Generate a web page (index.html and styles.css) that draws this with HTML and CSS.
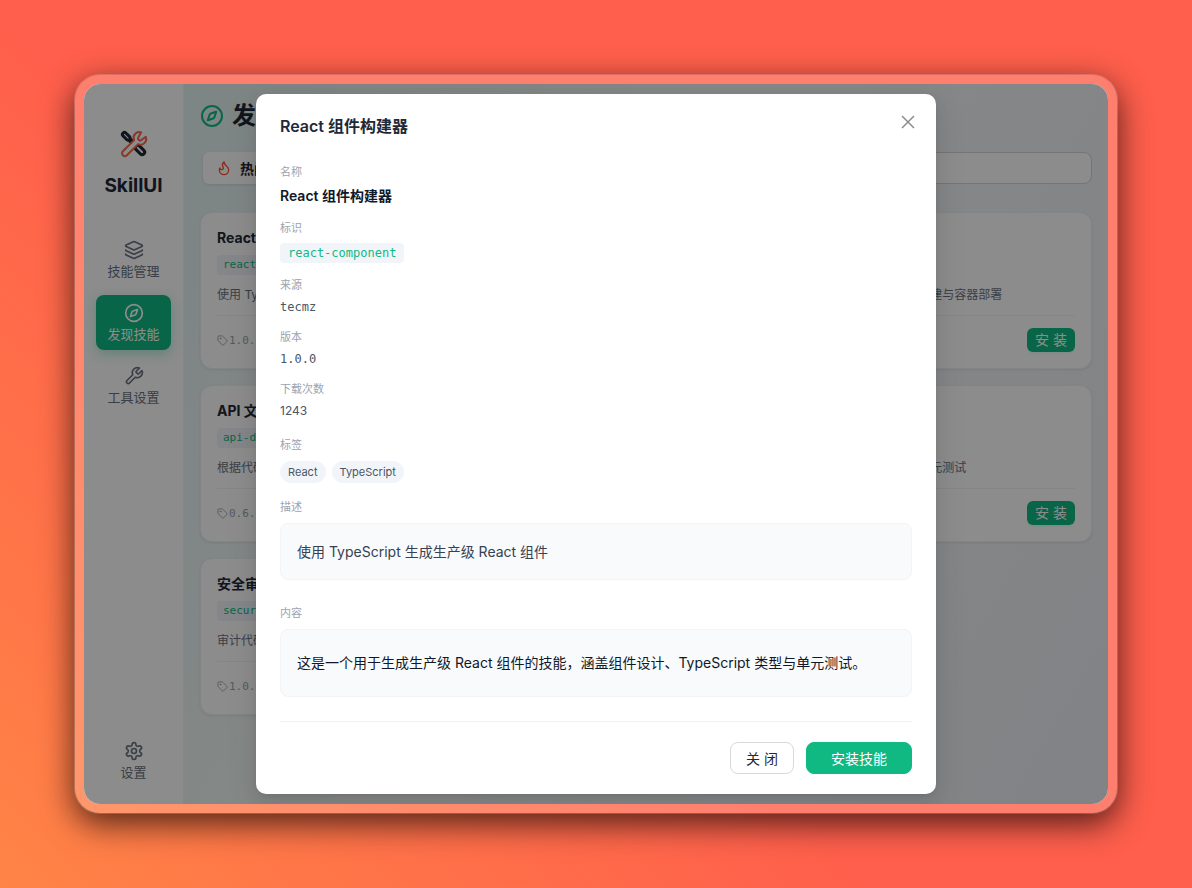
FILE: index.html
```html
<!DOCTYPE html>
<html lang="zh-CN">
<head>
    <meta charset="UTF-8">
    <meta name="viewport" content="width=device-width, initial-scale=1.0">
    <title>SkillUI</title>
    <link rel="stylesheet" href="styles.css">
</head>
<body>
    <!-- 公用图标 -->
    <svg class="sprite" aria-hidden="true">
        <symbol id="compass" viewBox="0 0 24 24">
            <circle cx="12" cy="12" r="10"/>
            <path d="m16.24 7.76-1.804 5.411a2 2 0 0 1-1.265 1.265L7.76 16.24l1.804-5.411a2 2 0 0 1 1.265-1.265z"/>
        </symbol>
        <symbol id="tag" viewBox="0 0 24 24">
            <path d="M12.586 2.586A2 2 0 0 0 11.172 2H4a2 2 0 0 0-2 2v7.172a2 2 0 0 0 .586 1.414l8.704 8.704a2.426 2.426 0 0 0 3.42 0l6.58-6.58a2.426 2.426 0 0 0 0-3.42z"/>
            <circle cx="7.5" cy="7.5" r="1"/>
        </symbol>
    </svg>

    <div class="window">
        <aside class="sidebar">
            <div class="brand">
                <svg class="logo" viewBox="0 0 28 28" aria-hidden="true">
                    <g class="logo-driver" transform="rotate(-45 14 14)">
                        <path d="M12 0.500a2 2 0 0 1 4 0v5.500l-1 2v6h-2v-6l-1-2z"/>
                        <path d="M11.500 17h5v8.500a2.500 2.500 0 0 1-5 0z"/>
                    </g>
                    <path class="logo-wrench" d="M18.300 7.600a1.200 1.200 0 0 0 0 1.700l1 1a1.200 1.200 0 0 0 1.700 0l4.700-3.400a5.600 5.600 0 0 1-7.600 7.200L6.900 25.300a2.800 2.800 0 0 1-4-4L14.100 10.100a5.600 5.600 0 0 1 7-7.600z"/>
                </svg>
                <span class="brand-name">SkillUI</span>
            </div>
            <nav class="nav">
                <a class="nav-item" href="#manage">
                    <svg class="icon" viewBox="0 0 24 24" aria-hidden="true">
                        <path d="M12.830 2.180a2 2 0 0 0-1.660 0L2.600 6.080a1 1 0 0 0 0 1.830l8.580 3.910a2 2 0 0 0 1.660 0l8.580-3.900a1 1 0 0 0 0-1.830z"/>
                        <path d="M2 12a1 1 0 0 0 .58.910l8.600 3.910a2 2 0 0 0 1.650 0l8.580-3.900A1 1 0 0 0 22 12"/>
                        <path d="M2 17a1 1 0 0 0 .58.910l8.600 3.910a2 2 0 0 0 1.650 0l8.580-3.900A1 1 0 0 0 22 17"/>
                    </svg>
                    <span>技能管理</span>
                </a>
                <a class="nav-item active" href="#discover">
                    <svg class="icon" aria-hidden="true"><use href="#compass"/></svg>
                    <span>发现技能</span>
                </a>
                <a class="nav-item" href="#tools">
                    <svg class="icon" viewBox="0 0 24 24" aria-hidden="true">
                        <path d="M14.700 6.300a1 1 0 0 0 0 1.400l1.600 1.600a1 1 0 0 0 1.400 0l3.770-3.770a6 6 0 0 1-7.940 7.940l-6.910 6.910a2.120 2.120 0 0 1-3-3l6.910-6.910a6 6 0 0 1 7.940-7.940z"/>
                    </svg>
                    <span>工具设置</span>
                </a>
                <a class="nav-item nav-bottom" href="#settings">
                    <svg class="icon" viewBox="0 0 24 24" aria-hidden="true">
                        <path d="M12.220 2h-.44a2 2 0 0 0-2 2v.18a2 2 0 0 1-1 1.730l-.43.25a2 2 0 0 1-2 0l-.15-.08a2 2 0 0 0-2.730.73l-.22.38a2 2 0 0 0 .73 2.730l.15.1a2 2 0 0 1 1 1.720v.51a2 2 0 0 1-1 1.740l-.15.09a2 2 0 0 0-.73 2.730l.22.38a2 2 0 0 0 2.730.73l.15-.08a2 2 0 0 1 2 0l.43.25a2 2 0 0 1 1 1.730V20a2 2 0 0 0 2 2h.44a2 2 0 0 0 2-2v-.18a2 2 0 0 1 1-1.730l.43-.25a2 2 0 0 1 2 0l.15.08a2 2 0 0 0 2.730-.73l.22-.39a2 2 0 0 0-.73-2.730l-.15-.08a2 2 0 0 1-1-1.740v-.5a2 2 0 0 1 1-1.740l.15-.09a2 2 0 0 0 .73-2.730l-.22-.38a2 2 0 0 0-2.730-.73l-.15.08a2 2 0 0 1-2 0l-.43-.25a2 2 0 0 1-1-1.730V4a2 2 0 0 0-2-2z"/>
                        <circle cx="12" cy="12" r="3"/>
                    </svg>
                    <span>设置</span>
                </a>
            </nav>
        </aside>

        <main class="main">
            <h1 class="page-title">
                <svg class="icon icon-lg" aria-hidden="true"><use href="#compass"/></svg>
                <span>发现技能</span>
            </h1>
            <div class="toolbar">
                <button class="tab" type="button">
                    <svg class="icon icon-sm" viewBox="0 0 24 24" aria-hidden="true">
                        <path d="M8.500 14.500A2.500 2.500 0 0 0 11 12c0-1.380-.5-2-1-3-1.072-2.143-.224-4.054 2-6 .5 2.500 2 4.900 4 6.500 2 1.600 3 3.500 3 5.500a7 7 0 1 1-14 0c0-1.153.433-2.294 1-3a2.500 2.500 0 0 0 2.500 2.500z"/>
                    </svg>
                    热门
                </button>
                <input class="search" type="search" aria-label="搜索技能">
            </div>
            <div class="cards">
                <article class="card">
                    <h2>React 组件构建器</h2>
                    <code class="slug">react-component</code>
                    <p>使用 TypeScript 生成生产级 React 组件</p>
                    <div class="card-foot">
                        <span class="version"><svg class="icon icon-xs" aria-hidden="true"><use href="#tag"/></svg>1.0.0</span>
                        <button class="install" type="button">安 装</button>
                    </div>
                </article>
                <article class="card">
                    <h2>SQL 优化</h2>
                    <code class="slug">sql-optimizer</code>
                    <p>分析并优化数据库查询</p>
                    <div class="card-foot">
                        <span class="version"><svg class="icon icon-xs" aria-hidden="true"><use href="#tag"/></svg>1.0.0</span>
                        <button class="install" type="button">安 装</button>
                    </div>
                </article>
                <article class="card">
                    <h2>Docker</h2>
                    <code class="slug">docker</code>
                    <p>自动完成应用镜像构建与容器部署</p>
                    <div class="card-foot">
                        <span class="version"><svg class="icon icon-xs" aria-hidden="true"><use href="#tag"/></svg>1.0.0</span>
                        <button class="install" type="button">安 装</button>
                    </div>
                </article>
                <article class="card">
                    <h2>API 文档</h2>
                    <code class="slug">api-docs</code>
                    <p>根据代码生成文档</p>
                    <div class="card-foot">
                        <span class="version"><svg class="icon icon-xs" aria-hidden="true"><use href="#tag"/></svg>0.6.4</span>
                        <button class="install" type="button">安 装</button>
                    </div>
                </article>
                <article class="card">
                    <h2>代码评审</h2>
                    <code class="slug">code-review</code>
                    <p>检查代码质量与规范</p>
                    <div class="card-foot">
                        <span class="version"><svg class="icon icon-xs" aria-hidden="true"><use href="#tag"/></svg>1.0.0</span>
                        <button class="install" type="button">安 装</button>
                    </div>
                </article>
                <article class="card">
                    <h2>单元测试</h2>
                    <code class="slug">unit-test</code>
                    <p>自动生成高覆盖率单元测试</p>
                    <div class="card-foot">
                        <span class="version"><svg class="icon icon-xs" aria-hidden="true"><use href="#tag"/></svg>1.0.0</span>
                        <button class="install" type="button">安 装</button>
                    </div>
                </article>
                <article class="card">
                    <h2>安全审计</h2>
                    <code class="slug">security</code>
                    <p>审计代码安全漏洞</p>
                    <div class="card-foot">
                        <span class="version"><svg class="icon icon-xs" aria-hidden="true"><use href="#tag"/></svg>1.0.0</span>
                        <button class="install" type="button">安 装</button>
                    </div>
                </article>
            </div>
        </main>

        <!-- 技能详情弹窗 -->
        <div class="overlay">
            <section class="modal" role="dialog" aria-modal="true" aria-labelledby="modalTitle">
                <button class="modal-close" type="button" aria-label="关闭">
                    <svg viewBox="0 0 14 14" aria-hidden="true"><path d="M1 1l12 12M13 1L1 13"/></svg>
                </button>
                <h2 class="modal-title" id="modalTitle">React 组件构建器</h2>
                <dl class="details">
                    <div class="field">
                        <dt>名称</dt>
                        <dd class="name">React 组件构建器</dd>
                    </div>
                    <div class="field">
                        <dt>标识</dt>
                        <dd class="ident"><code>react-component</code></dd>
                    </div>
                    <div class="field">
                        <dt>来源</dt>
                        <dd class="mono">tecmz</dd>
                    </div>
                    <div class="field">
                        <dt>版本</dt>
                        <dd class="mono">1.0.0</dd>
                    </div>
                    <div class="field">
                        <dt>下载次数</dt>
                        <dd>1243</dd>
                    </div>
                </dl>
                <div class="block">
                    <h3>标签</h3>
                    <div class="tags">
                        <span class="tag">React</span>
                        <span class="tag">TypeScript</span>
                    </div>
                </div>
                <div class="block">
                    <h3>描述</h3>
                    <div class="panel">使用 TypeScript 生成生产级 React 组件</div>
                </div>
                <div class="block block-content">
                    <h3>内容</h3>
                    <div class="panel panel-content">这是一个用于生成生产级 React 组件的技能，涵盖组件设计、TypeScript 类型与单元测试。</div>
                </div>
                <div class="modal-foot">
                    <button class="btn" type="button">关 闭</button>
                    <button class="btn btn-primary" type="button">安装技能</button>
                </div>
            </section>
        </div>
    </div>
</body>
</html>
```
FILE: styles.css
```css
* {
    box-sizing: border-box;
}

body {
    margin: 0;
    min-height: 100vh;
    padding: 74px;
    display: flex;
    font-family: Inter, "Noto Sans CJK SC", sans-serif;
    font-size: 14px;
    color: #1f2937;
    background: linear-gradient(45deg, #ff8446 0%, #ff5f4c 42%);
}

h1, h2, h3, p, dl, dd {
    margin: 0;
}

button, input {
    font-family: inherit;
}

button {
    cursor: pointer;
}

code, .mono, .version {
    font-family: "DejaVu Sans Mono", monospace;
}

.sprite {
    position: absolute;
    width: 0;
    height: 0;
}

.icon {
    width: 20px;
    height: 20px;
    flex: none;
    fill: none;
    stroke: currentColor;
    stroke-width: 2;
    stroke-linecap: round;
    stroke-linejoin: round;
}

.icon-lg {
    width: 24px;
    height: 24px;
    color: #10b981;
}

.icon-sm {
    width: 16px;
    height: 16px;
    color: #f9532d;
}

.icon-xs {
    width: 11px;
    height: 11px;
}

/* 窗口外框 */
.window {
    position: relative;
    flex: 1;
    min-width: 0;
    display: flex;
    border: 10px solid rgba(255, 255, 255, 0.2);
    border-radius: 26px;
    background: #fff;
    background-clip: padding-box;
    box-shadow: 0 10px 32px rgba(0, 0, 0, 0.68);
}

/* 侧边栏 */
.sidebar {
    width: 100px;
    flex: none;
    display: flex;
    flex-direction: column;
    gap: 34px;
    padding: 46px 12px 16px;
    border-right: 1px solid #f3f4f6;
    border-radius: 16px 0 0 16px;
    background: #fdfffe;
}

.brand {
    display: flex;
    flex-direction: column;
    align-items: center;
    gap: 16px;
}

.logo {
    width: 28px;
    height: 28px;
    fill: #fdfffe;
    stroke-width: 2;
    stroke-linejoin: round;
    overflow: visible;
}

.logo-driver {
    stroke: #1f2937;
    stroke-width: 3;
}

.logo-wrench {
    stroke: #f4694a;
    stroke-width: 2;
}

.brand-name {
    font-size: 19px;
    line-height: 24px;
    font-weight: 700;
}

.nav {
    flex: 1;
    display: flex;
    flex-direction: column;
    gap: 8px;
}

.nav-item {
    display: flex;
    flex-direction: column;
    align-items: center;
    gap: 2px;
    padding: 8px 0 7px;
    border-radius: 8px;
    font-size: 13px;
    line-height: 18px;
    color: #6b7280;
    text-decoration: none;
}

.nav-item.active {
    color: #fff;
    background: #10b981;
    box-shadow: 0 4px 12px rgba(16, 185, 129, 0.3);
}

.nav-bottom {
    margin-top: auto;
}

/* 主内容 */
.main {
    flex: 1;
    min-width: 0;
    padding: 16px;
    border-radius: 0 16px 16px 0;
    background: linear-gradient(120deg, #e2f4f1 0%, #f5f8f7 45%, #eceef5 100%);
}

.page-title {
    display: flex;
    align-items: center;
    gap: 8px;
    margin-bottom: 20px;
    font-size: 24px;
    line-height: 32px;
    font-weight: 700;
}

.toolbar {
    display: flex;
    gap: 16px;
    margin-bottom: 28px;
    padding-left: 3px;
}

.tab {
    display: flex;
    align-items: center;
    gap: 8px;
    height: 32px;
    padding: 0 13px;
    border: 0;
    border-radius: 6px;
    font-size: 14px;
    font-weight: 600;
    color: #1f2937;
    background: #fff;
    box-shadow: 0 1px 3px rgba(0, 0, 0, 0.1);
}

.search {
    flex: 1;
    min-width: 0;
    height: 32px;
    padding: 0 12px;
    border: 1px solid #d1d5db;
    border-radius: 8px;
    background: #fff;
}

.cards {
    display: grid;
    grid-template-columns: repeat(3, minmax(0, 1fr));
    gap: 16px;
}

.card {
    padding: 16px;
    border: 1px solid #edf0f3;
    border-radius: 12px;
    background: #fff;
    box-shadow: 0 1px 3px rgba(0, 0, 0, 0.08);
}

.card h2 {
    margin-bottom: 8px;
    font-size: 14px;
    line-height: 18px;
    font-weight: 700;
}

.slug {
    display: block;
    width: fit-content;
    margin-bottom: 10px;
    padding: 0 6px;
    border-radius: 4px;
    font-size: 11px;
    line-height: 20px;
    color: #10b981;
    background: #f1f5f9;
}

.card p {
    margin-bottom: 10px;
    font-size: 12px;
    line-height: 20px;
    color: #6b7280;
    white-space: nowrap;
    overflow: hidden;
    text-overflow: ellipsis;
}

.card-foot {
    display: flex;
    justify-content: space-between;
    align-items: center;
    padding-top: 12px;
    border-top: 1px solid #f0f2f4;
}

.version {
    display: flex;
    align-items: center;
    gap: 1px;
    font-size: 11px;
    color: #9ca3af;
}

.install {
    height: 24px;
    padding: 0 8px;
    border: 0;
    border-radius: 6px;
    font-size: 14px;
    line-height: 24px;
    color: #fff;
    background: #10b981;
    box-shadow: 0 2px 0 rgba(5, 255, 164, 0.08);
}

/* 弹窗 */
.overlay {
    position: absolute;
    inset: 0;
    display: flex;
    justify-content: center;
    align-items: center;
    border-radius: 16px;
    overflow: hidden;
    background: rgba(0, 0, 0, 0.45);
}

.modal {
    position: relative;
    width: 100%;
    max-width: 680px;
    padding: 20px 24px;
    border-radius: 10px;
    background: #fff;
    box-shadow: 0 6px 16px rgba(0, 0, 0, 0.08), 0 3px 6px -4px rgba(0, 0, 0, 0.12), 0 9px 28px 8px rgba(0, 0, 0, 0.05);
}

.modal-close {
    position: absolute;
    top: 17px;
    right: 17px;
    display: grid;
    place-items: center;
    width: 22px;
    height: 22px;
    padding: 0;
    border: 0;
    background: none;
}

.modal-close svg {
    width: 14px;
    height: 14px;
    stroke: #8c8c8c;
    stroke-width: 1.500;
}

.modal-title {
    margin-bottom: 26px;
    font-size: 16px;
    line-height: 24px;
    font-weight: 600;
}

.details {
    display: flex;
    flex-direction: column;
    gap: 12px;
}

.field dt, .block h3 {
    font-size: 11px;
    line-height: 16px;
    font-weight: 400;
    color: #9ca3af;
}

.field dd {
    margin-top: 4px;
    font-size: 12px;
    line-height: 20px;
    color: #4b5563;
}

.field .name {
    font-size: 14px;
    line-height: 24px;
    font-weight: 600;
    color: #111827;
}

.ident code {
    display: block;
    width: fit-content;
    margin: 7px 0 2px;
    padding: 0 8px;
    border-radius: 4px;
    color: #10b981;
    background: #f1f5f9;
}

.field .ident {
    margin-top: 0;
}

.block {
    margin-top: 16px;
}

.block h3 {
    margin-bottom: 8px;
}

.block-content {
    margin-top: 25px;
}

.tags {
    display: flex;
    gap: 6px;
}

.tag {
    padding: 0 8px;
    border-radius: 11px;
    font-size: 11px;
    line-height: 22px;
    color: #4b5563;
    background: #f1f5f9;
}

.panel {
    padding: 16px;
    border: 1px solid #f1f5f9;
    border-radius: 8px;
    line-height: 23px;
    color: #374151;
    background: #f8fafc;
}

.panel-content {
    padding: 22px 16px;
    line-height: 22px;
    color: #111827;
}

.modal-foot {
    display: flex;
    justify-content: flex-end;
    gap: 12px;
    margin-top: 24px;
    padding-top: 20px;
    border-top: 1px solid #f0f0f0;
}

.btn {
    height: 32px;
    padding: 0 15px;
    border: 1px solid #d9d9d9;
    border-radius: 8px;
    font-size: 14px;
    color: #1f2937;
    background: #fff;
}

.btn-primary {
    padding: 0 24px;
    border-color: #10b981;
    color: #fff;
    background: #10b981;
}
```
